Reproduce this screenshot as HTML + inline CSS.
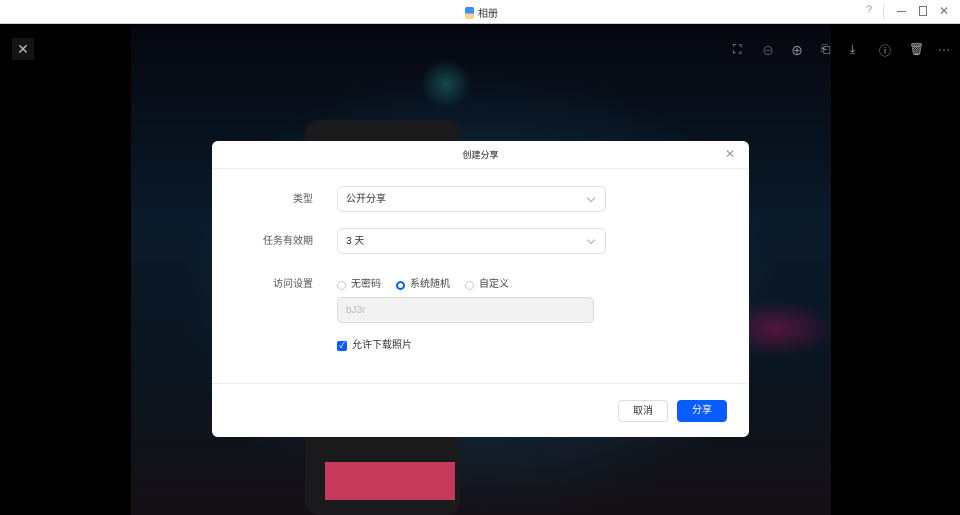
<!DOCTYPE html>
<html><head><meta charset="utf-8"><style>
*{margin:0;padding:0;box-sizing:border-box}
body{width:960px;height:515px;overflow:hidden;background:#000;font-family:"Liberation Sans","Noto Sans CJK SC",sans-serif;position:relative}
.top{position:absolute;left:0;top:0;width:960px;height:24px;background:#fff;border-bottom:1px solid #ccc}
.title{position:absolute;left:465px;top:5px;font-size:10px;color:#333;display:flex;align-items:center;gap:4px}
.logo{width:9px;height:12px;border-radius:2px;background:linear-gradient(#3a8ef5 55%,#f6d28a 55%)}
.photo{position:absolute;left:131px;top:25px;width:700px;height:490px;
background:
radial-gradient(circle at 45% 12%,rgba(30,110,110,.6) 0,transparent 25px),
radial-gradient(circle at 22% 28%,rgba(100,30,40,.6) 0,transparent 20px),
radial-gradient(ellipse at 50% 55%,rgba(20,60,90,.8) 0,transparent 300px),
radial-gradient(ellipse at 92% 62%,rgba(130,20,80,.6) 0,transparent 60px),
linear-gradient(#05070f,#0b1a2a 40%,#0b1520 70%,#151015)}
.phone{position:absolute;left:305px;top:120px;width:155px;height:395px;border-radius:14px;background:#1a1a1d}
.pink{position:absolute;left:325px;top:462px;width:130px;height:38px;background:#c53a5a}
.icons{position:absolute;top:42px;color:#aaa;font-size:12px}
.x{position:absolute;left:12px;top:38px;width:22px;height:22px;background:#141414;color:#bbb;font-size:14px;text-align:center;line-height:22px}
.dlg{position:absolute;left:212px;top:141px;width:537px;height:296px;background:#fff;border-radius:6px}
.dh{height:28px;border-bottom:1px solid #eee;text-align:center;font-size:9px;line-height:28px;color:#222}
.close{position:absolute;right:14px;top:6px;font-size:12px;color:#999}
.lab{position:absolute;font-size:10px;line-height:12px;color:#555;text-align:right;width:80px;left:21px}
.sel{position:absolute;left:125px;width:269px;height:26px;border:1px solid #e2e2e2;border-radius:5px;font-size:10px;color:#333;padding-left:8px;line-height:25px}
.sel:after{content:"";position:absolute;right:11px;top:8px;width:5px;height:5px;border-right:1px solid #aaa;border-bottom:1px solid #aaa;transform:rotate(45deg)}
.r{position:absolute;font-size:10px;line-height:12px;color:#444;display:flex;align-items:center;gap:5px}
.rb{width:9px;height:9px;border:1px solid #ccc;border-radius:50%}
.rb.on{border:2.5px solid #0a5cff}
.pw{position:absolute;left:125px;top:156px;width:257px;height:26px;background:#f2f2f2;border:1px solid #ddd;border-radius:5px;font-size:10px;color:#bbb;padding-left:8px;line-height:26px}
.cb{position:absolute;left:125px;font-size:10px;line-height:12px;color:#333;display:flex;align-items:center;gap:5px}
.cbx{width:10px;height:10px;background:#0a5cff;border-radius:2px;color:#fff;font-size:8px;line-height:10px;text-align:center}
.ft{position:absolute;left:0;top:242px;width:100%;border-top:1px solid #eee}
.btn{position:absolute;top:259px;width:50px;height:22px;border-radius:4px;font-size:10px;text-align:center;line-height:21px}
</style></head><body>
<div class="top"><div class="title"><div class="logo"></div>相册</div>
<div style="position:absolute;left:866px;top:4px;font-size:11px;color:#999">?</div>
<div style="position:absolute;left:883px;top:5px;width:1px;height:14px;background:#ddd"></div>
<div style="position:absolute;left:897px;top:11px;width:9px;height:1px;background:#777"></div>
<div style="position:absolute;left:919px;top:6px;width:8px;height:10px;border:1px solid #777"></div>
<div style="position:absolute;left:939px;top:4px;font-size:12px;color:#777">✕</div>
</div>
<div class="photo"></div>
<div class="phone"></div>
<div class="pink"></div>
<div class="x">✕</div>
<div class="icons" style="left:733px">⛶</div>
<div class="icons" style="left:762px;color:#666">⊖</div>
<div class="icons" style="left:791px">⊕</div>
<div class="icons" style="left:821px">⎗</div>
<div class="icons" style="left:850px">⤓</div>
<div class="icons" style="left:879px">ⓘ</div>
<div class="icons" style="left:909px">🗑</div>
<div class="icons" style="left:938px">···</div>
<div class="dlg">
<div class="dh">创建分享</div><div class="close">✕</div>
<div class="lab" style="top:53px">类型</div>
<div class="sel" style="top:45px">公开分享</div>
<div class="lab" style="top:95px">任务有效期</div>
<div class="sel" style="top:87px">3 天</div>
<div class="lab" style="top:138px">访问设置</div>
<div class="r" style="left:125px;top:138px"><div class="rb"></div>无密码</div>
<div class="r" style="left:184px;top:138px"><div class="rb on"></div>系统随机</div>
<div class="r" style="left:253px;top:138px"><div class="rb"></div>自定义</div>
<div class="pw">bJ3r</div>
<div class="cb" style="top:199px"><div class="cbx">✓</div>允许下载照片</div>
<div class="ft"></div>
<div class="btn" style="left:406px;border:1px solid #ddd;color:#333">取消</div>
<div class="btn" style="left:465px;background:#0a5cff;color:#fff">分享</div>
</div>
</body></html>
